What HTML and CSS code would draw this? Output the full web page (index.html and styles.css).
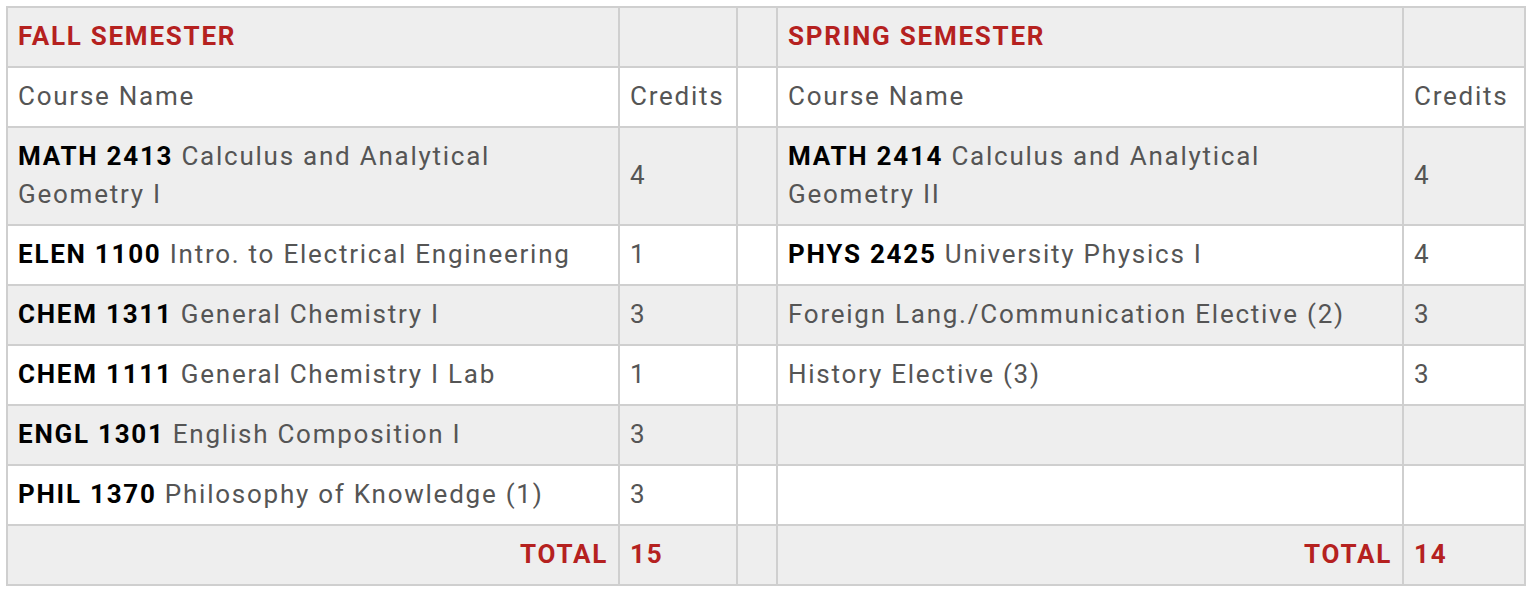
FILE: index.html
```html
<!DOCTYPE html>
<html lang="en">
<head>
<meta charset="utf-8">
<title>Degree Plan</title>
<link rel="stylesheet" href="styles.css">
</head>
<body>
<table class="plan">
  <colgroup>
    <col class="c-course-fall">
    <col class="c-credits-fall">
    <col class="c-gap">
    <col class="c-course-spring">
    <col class="c-credits-spring">
  </colgroup>
  <tbody>
    <tr class="alt">
      <th class="sem">FALL SEMESTER</th><td></td><td></td>
      <th class="sem">SPRING SEMESTER</th><td></td>
    </tr>
    <tr>
      <td>Course Name</td><td>Credits</td><td></td>
      <td>Course Name</td><td>Credits</td>
    </tr>
    <tr class="alt">
      <td><b>MATH 2413</b> Calculus and Analytical Geometry I</td><td>4</td><td></td>
      <td><b>MATH 2414</b> Calculus and Analytical Geometry II</td><td>4</td>
    </tr>
    <tr>
      <td><b>ELEN 1100</b> Intro. to Electrical Engineering</td><td>1</td><td></td>
      <td><b>PHYS 2425</b> University Physics I</td><td>4</td>
    </tr>
    <tr class="alt">
      <td><b>CHEM 1311</b> General Chemistry I</td><td>3</td><td></td>
      <td>Foreign Lang./Communication Elective (2)</td><td>3</td>
    </tr>
    <tr>
      <td><b>CHEM 1111</b> General Chemistry I Lab</td><td>1</td><td></td>
      <td>History Elective (3)</td><td>3</td>
    </tr>
    <tr class="alt">
      <td><b>ENGL 1301</b> English Composition I</td><td>3</td><td></td>
      <td></td><td></td>
    </tr>
    <tr>
      <td><b>PHIL 1370</b> Philosophy of Knowledge (1)</td><td>3</td><td></td>
      <td></td><td></td>
    </tr>
    <tr class="alt total">
      <td class="label">TOTAL</td><td>15</td><td></td>
      <td class="label">TOTAL</td><td>14</td>
    </tr>
  </tbody>
</table>
</body>
</html>
```
FILE: styles.css
```css
html, body {
  margin: 0;
  padding: 0;
  background: #ffffff;
}
body {
  padding: 6px;
  font-family: Roboto, "Liberation Sans", sans-serif;
  font-size: 26px;
  line-height: 38px;
  letter-spacing: 1.75px;
  color: #555555;
}
.plan {
  border-collapse: separate;
  border-spacing: 0;
  table-layout: fixed;
  width: 1520px;
  border-left: 2px solid #cfcfcf;
  border-top: 2px solid #cfcfcf;
}
.c-course-fall { width: 612px; }
.c-credits-fall { width: 118px; }
.c-gap { width: 40px; }
.c-course-spring { width: 626px; }
.c-credits-spring { width: 122px; }
.plan td,
.plan th {
  box-sizing: border-box;
  padding: 9px 10px 11px;
  height: 60px;
  border-right: 2px solid #cfcfcf;
  border-bottom: 2px solid #cfcfcf;
  text-align: left;
  vertical-align: middle;
  font-weight: 400;
}
.plan tr.alt td,
.plan tr.alt th {
  background: #eeeeee;
}
.plan th.sem {
  color: #b5211f;
  font-weight: 700;
}
.plan b {
  color: #000000;
  font-weight: 700;
}
.plan tr.total td {
  color: #b5211f;
  font-weight: 700;
}
.plan tr.total td.label {
  text-align: right;
}
```
